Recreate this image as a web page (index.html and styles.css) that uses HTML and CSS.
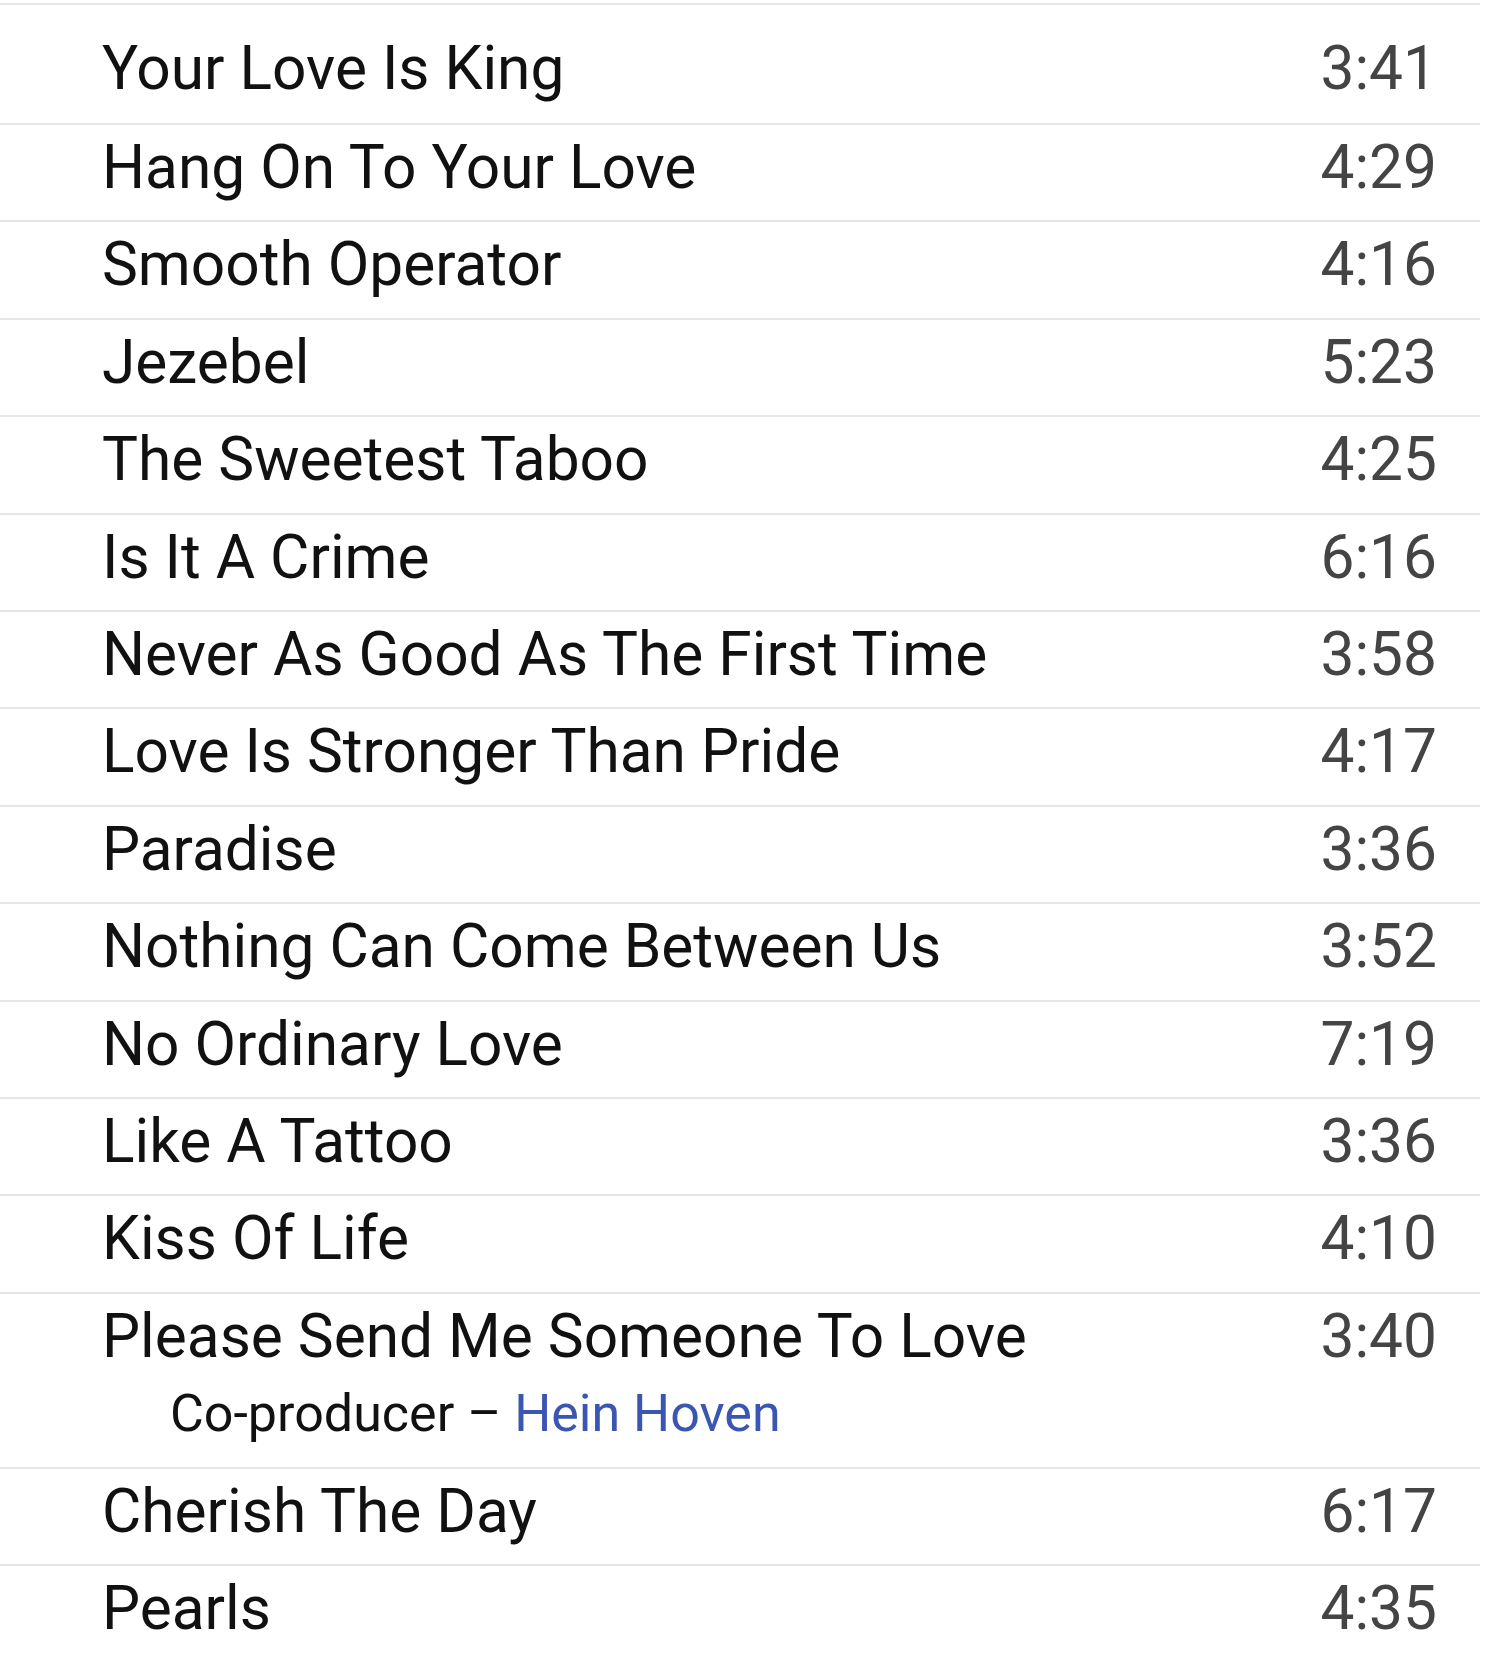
FILE: index.html
```html
<!DOCTYPE html>
<html>
<head>
<meta charset="utf-8">
<link rel="stylesheet" href="styles.css">
</head>
<body>
<div class="tracklist">
  <div class="track first"><div class="title">Your Love Is King</div><div class="dur">3:41</div></div>
  <div class="track"><div class="title">Hang On To Your Love</div><div class="dur">4:29</div></div>
  <div class="track"><div class="title">Smooth Operator</div><div class="dur">4:16</div></div>
  <div class="track"><div class="title">Jezebel</div><div class="dur">5:23</div></div>
  <div class="track"><div class="title">The Sweetest Taboo</div><div class="dur">4:25</div></div>
  <div class="track"><div class="title">Is It A Crime</div><div class="dur">6:16</div></div>
  <div class="track"><div class="title">Never As Good As The First Time</div><div class="dur">3:58</div></div>
  <div class="track"><div class="title">Love Is Stronger Than Pride</div><div class="dur">4:17</div></div>
  <div class="track"><div class="title">Paradise</div><div class="dur">3:36</div></div>
  <div class="track"><div class="title">Nothing Can Come Between Us</div><div class="dur">3:52</div></div>
  <div class="track"><div class="title">No Ordinary Love</div><div class="dur">7:19</div></div>
  <div class="track"><div class="title">Like A Tattoo</div><div class="dur">3:36</div></div>
  <div class="track"><div class="title">Kiss Of Life</div><div class="dur">4:10</div></div>
  <div class="track tall">
    <div class="info">
      <div class="title">Please Send Me Someone To Love</div>
      <div class="credit">Co-producer – <a class="artist" href="#">Hein Hoven</a></div>
    </div>
    <div class="dur">3:40</div>
  </div>
  <div class="track"><div class="title">Cherish The Day</div><div class="dur">6:17</div></div>
  <div class="track last"><div class="title">Pearls</div><div class="dur">4:35</div></div>
</div>
</body>
</html>
```

FILE: styles.css
```css
html, body {
  margin: 0;
  padding: 0;
  background: #ffffff;
}
body {
  font-family: Roboto, "Liberation Sans", sans-serif;
  padding-top: 3px;
}
.tracklist {
  width: 1480px;
}
.track {
  display: flex;
  align-items: flex-start;
  justify-content: space-between;
  box-sizing: border-box;
  height: 97.4px;
  padding: 8px 43px 0 102px;
  border-top: 2px solid #e6e6e6;
  font-size: 60.4px;
  line-height: 70px;
}
.track.first {
  height: 120px;
  padding-top: 29px;
}
.track.tall {
  height: 175px;
  padding-top: 8px;
}
.track.last {
  height: 96px;
}
.title {
  color: #111111;
}
.dur {
  color: #444444;
}
.credit {
  font-size: 52px;
  line-height: 60px;
  margin-top: 12px;
  padding-left: 68px;
  color: #111111;
}
.artist {
  color: #3a56b0;
  text-decoration: none;
}
```
